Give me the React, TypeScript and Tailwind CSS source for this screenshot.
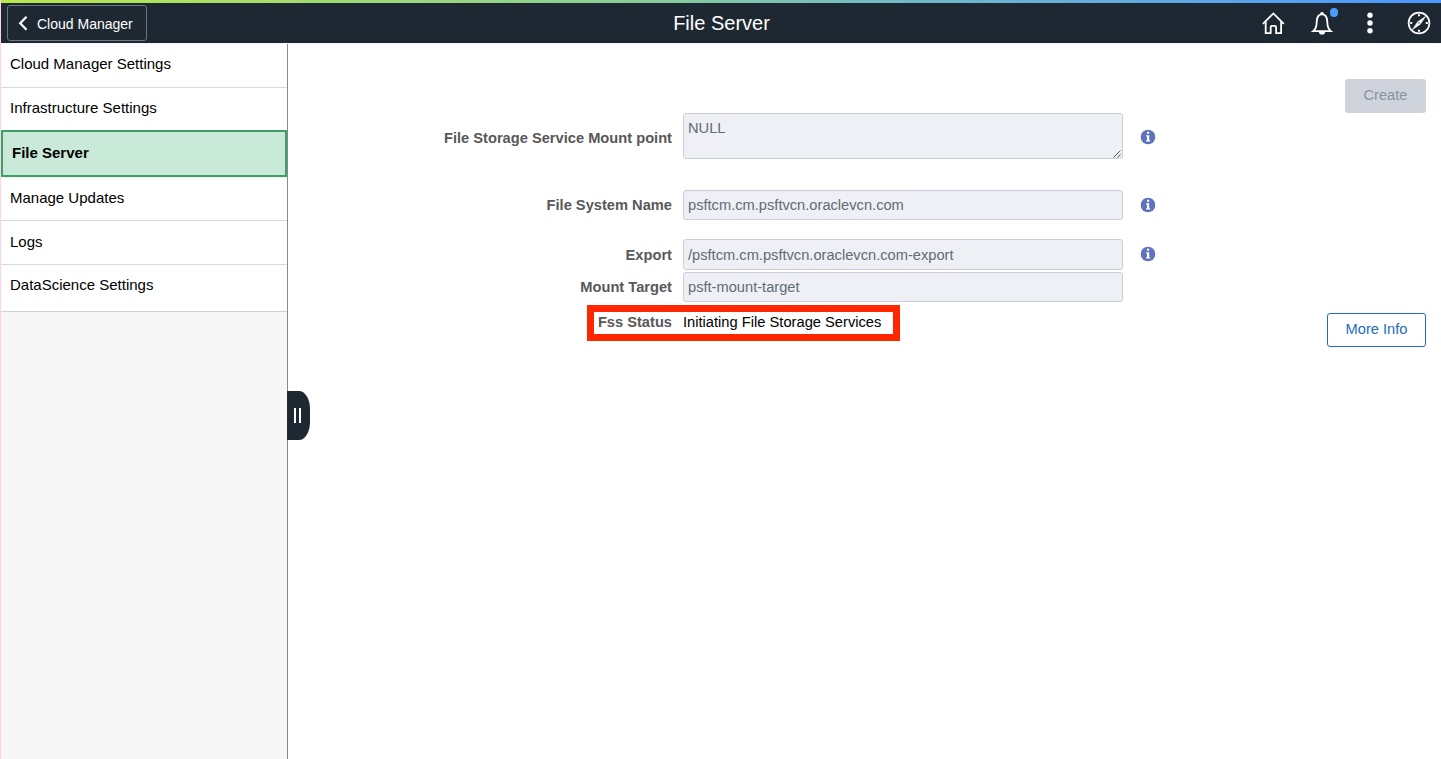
import React from 'react';

type MenuRow = { label: string; className: string };

const menu: MenuRow[] = [
  { label: 'Cloud Manager Settings', className: 'h-[44px] border-b border-[#d9d9d9] pt-[10px] pl-[9px]' },
  { label: 'Infrastructure Settings', className: 'h-[42px] pt-[10px] pl-[9px]' },
  {
    label: 'File Server',
    className: 'h-[47px] mb-px border-2 border-[#3d9f64] bg-[#c9ead8] pt-[11px] pl-[9px] font-bold',
  },
  { label: 'Manage Updates', className: 'h-[43px] border-b border-[#d9d9d9] pt-[10px] pl-[9px]' },
  { label: 'Logs', className: 'h-[44px] border-b border-[#d9d9d9] pt-[11px] pl-[9px]' },
  { label: 'DataScience Settings', className: 'h-[47px] border-b border-[#d0d2d8] pt-[10px] pl-[9px]' },
];

function HomeIcon() {
  return (
    <svg width="24" height="24" viewBox="0 0 24 24" fill="none" stroke="#fff" strokeWidth="1.8">
      <path d="M1.900 12.800 12.400 2.400l10.400 10.400" />
      <path d="M4.700 10.500v11.700h5v-6q0-1.300 1.300-1.300h2.800q1.300 0 1.300 1.300v6h5v-11.700" />
    </svg>
  );
}

function BellIcon() {
  return (
    <svg width="24" height="26" viewBox="0 0 24 26" fill="none" stroke="#fff" strokeWidth="1.800">
      <path d="M3.200 21.100h17.600c-1.900-1.600-2.900-3-3.200-5.800l-.4-4.400C16.900 6.700 15 4.300 12 4.300S7.100 6.700 6.800 10.900l-.4 4.400C6.100 18.100 5.100 19.500 3.200 21.100z" />
      <path d="M10 4.200a2 2.200 0 0 1 4 0z" fill="#fff" stroke="none" />
      <path d="M9 21.900a3 2.700 0 0 0 6 0z" fill="#fff" stroke="none" />
    </svg>
  );
}

function CompassIcon() {
  return (
    <svg width="24" height="24" viewBox="0 0 24 24" fill="none" stroke="#fff">
      <circle cx="12" cy="12" r="10.400" strokeWidth="1.700" />
      <path d="M18.700 5.300 13.300 13.300 5.300 18.700 10.700 10.700z" fill="#fff" strokeWidth="0.500" />
      <circle cx="12" cy="12" r="0.700" fill="#1e2733" stroke="none" />
      <path d="M12 3.200v2M12 18.800v2M3.200 12h2M18.800 12h2" strokeWidth="2" />
    </svg>
  );
}

function InfoIcon({ className = '' }: { className?: string }) {
  return (
    <svg width="16" height="16" viewBox="0 0 16 16" className={`ml-[17px] shrink-0 ${className}`}>
      <circle cx="8" cy="8" r="7.300" fill="#5f72bd" />
      <path d="M7 2.700h2.200v2H7zM6 6.300h3.200v5h1v1.300H6v-1.300h1V7.600H6z" fill="#fff" />
    </svg>
  );
}

function Label({ text, className = '' }: { text: string; className?: string }) {
  return (
    <div className={`w-[384px] shrink-0 text-right text-[14.67px] leading-[20px] font-bold text-[#585858] ${className}`}>
      {text}
    </div>
  );
}

const box =
  'ml-[11px] flex w-[440px] shrink-0 rounded-[3px] border border-[#c9ced8] bg-[#eef0f5] pl-[4px] text-[14.67px] leading-[20px] text-[#626b76]';

export default function App() {
  return (
    <div className="flex h-[759px] w-[1441px] overflow-hidden border-l border-[#ffd3e6] bg-white font-['Liberation_Sans',Arial,sans-serif] text-[15px] text-black">
      <div className="flex w-full flex-col">
        <div className="h-[3px] shrink-0 bg-[linear-gradient(90deg,#b9e84c_0%,#8dcf92_42%,#76bdc0_59%,#5ba5ea_85%,#4a97ff_100%)]" />
        <header className="grid h-[40px] shrink-0 grid-cols-3 items-center bg-[#1e2833] text-white">
          <div className="pl-[6px]">
            <button className="flex h-[36px] w-[140px] items-center rounded-[3px] border border-[#6d7681] pl-[10px] text-[14px]">
              <svg width="10" height="16" viewBox="0 0 10 16" fill="none" stroke="#fff" strokeWidth="2.200">
                <path d="M8.500 1.800 2.200 8.300l6.300 6.500" />
              </svg>
              <span className="mt-[2px] ml-[9px]">Cloud Manager</span>
            </button>
          </div>
          <h1 className="pl-px text-center text-[20px] leading-[24px]">File Server</h1>
          <div className="flex items-center justify-end pr-[10px]">
            <HomeIcon />
            <div className="relative ml-[25px]">
              <BellIcon />
              <span className="absolute top-[-2px] left-[20px] h-[9px] w-[8px] rounded-full bg-[#4a9cff]" />
            </div>
            <svg width="6" height="22" viewBox="0 0 6 22" fill="#fff" className="ml-[33px]">
              <circle cx="3" cy="3.200" r="2.700" />
              <circle cx="3" cy="11" r="2.700" />
              <circle cx="3" cy="18.800" r="2.700" />
            </svg>
            <div className="ml-[34px]">
              <CompassIcon />
            </div>
          </div>
        </header>
        <div className="h-px shrink-0 bg-[#f3f4f8]" />
        <div className="flex min-h-0 flex-1">
          <aside className="relative w-[287px] shrink-0 border-r border-[#858b94] bg-[#f7f7f7]">
            <nav className="flex flex-col">
              {menu.map((row) => (
                <div key={row.label} className={`leading-[20px] ${row.label === 'File Server' ? '' : 'bg-white'} ${row.className}`}>
                  {row.label}
                </div>
              ))}
            </nav>
            <div className="absolute top-[347px] left-[286px] flex h-[49px] w-[23px] items-center gap-[3px] rounded-r-[11px_18px] bg-[#1e2833] pl-[7px]">
              <span className="h-[15px] w-[2px] bg-white" />
              <span className="h-[15px] w-[2px] bg-white" />
            </div>
          </aside>
          <main className="relative flex flex-1 justify-between pr-[15px]">
            <div className="flex flex-col pt-[69px]">
              <div className="flex h-[46px] items-center">
                <Label text="File Storage Service Mount point" className="mt-[4px]" />
                <div className={`${box} h-[46px] items-start justify-between pt-[4px]`}>
                  <span>NULL</span>
                  <svg width="10" height="10" viewBox="0 0 10 10" stroke="#555" strokeWidth="1" className="mt-[31px]">
                    <path d="M1.500 8.500l7-7M5.500 8.500l3-3" />
                  </svg>
                </div>
                <InfoIcon className="mt-[2px]" />
              </div>
              <div className="mt-[31px] flex h-[30px] items-center">
                <Label text="File System Name" />
                <div className={`${box} h-[30px] items-center`}>psftcm.cm.psftvcn.oraclevcn.com</div>
                <InfoIcon />
              </div>
              <div className="mt-[19px] flex h-[31px] items-center">
                <Label text="Export" />
                <div className={`${box} h-[31px] items-center`}>/psftcm.cm.psftvcn.oraclevcn.com-export</div>
                <InfoIcon className="mb-px" />
              </div>
              <div className="mt-[2px] flex h-[30px] items-center">
                <Label text="Mount Target" />
                <div className={`${box} h-[30px] items-center`}>psft-mount-target</div>
              </div>
              <div className="mt-[10px] flex h-[20px] items-center">
                <Label text="Fss Status" />
                <span className="ml-[11px] text-[14.7px] leading-[20px]">Initiating File Storage Services</span>
              </div>
            </div>
            <div className="absolute top-[261px] left-[299px] h-[36px] w-[313px] border-[7px] border-[#ff2600]" />
            <div className="flex flex-col items-end pt-[35px]">
              <button className="h-[34px] w-[81px] rounded-[3px] bg-[#ced3dc] pb-[2px] text-[14.67px] text-[#8a929c]">Create</button>
              <button className="mt-[200px] h-[34px] w-[99px] rounded-[3px] border border-[#226bc3] pb-[2px] text-[14.67px] text-[#226bc3]">
                More Info
              </button>
            </div>
          </main>
        </div>
      </div>
    </div>
  );
}
